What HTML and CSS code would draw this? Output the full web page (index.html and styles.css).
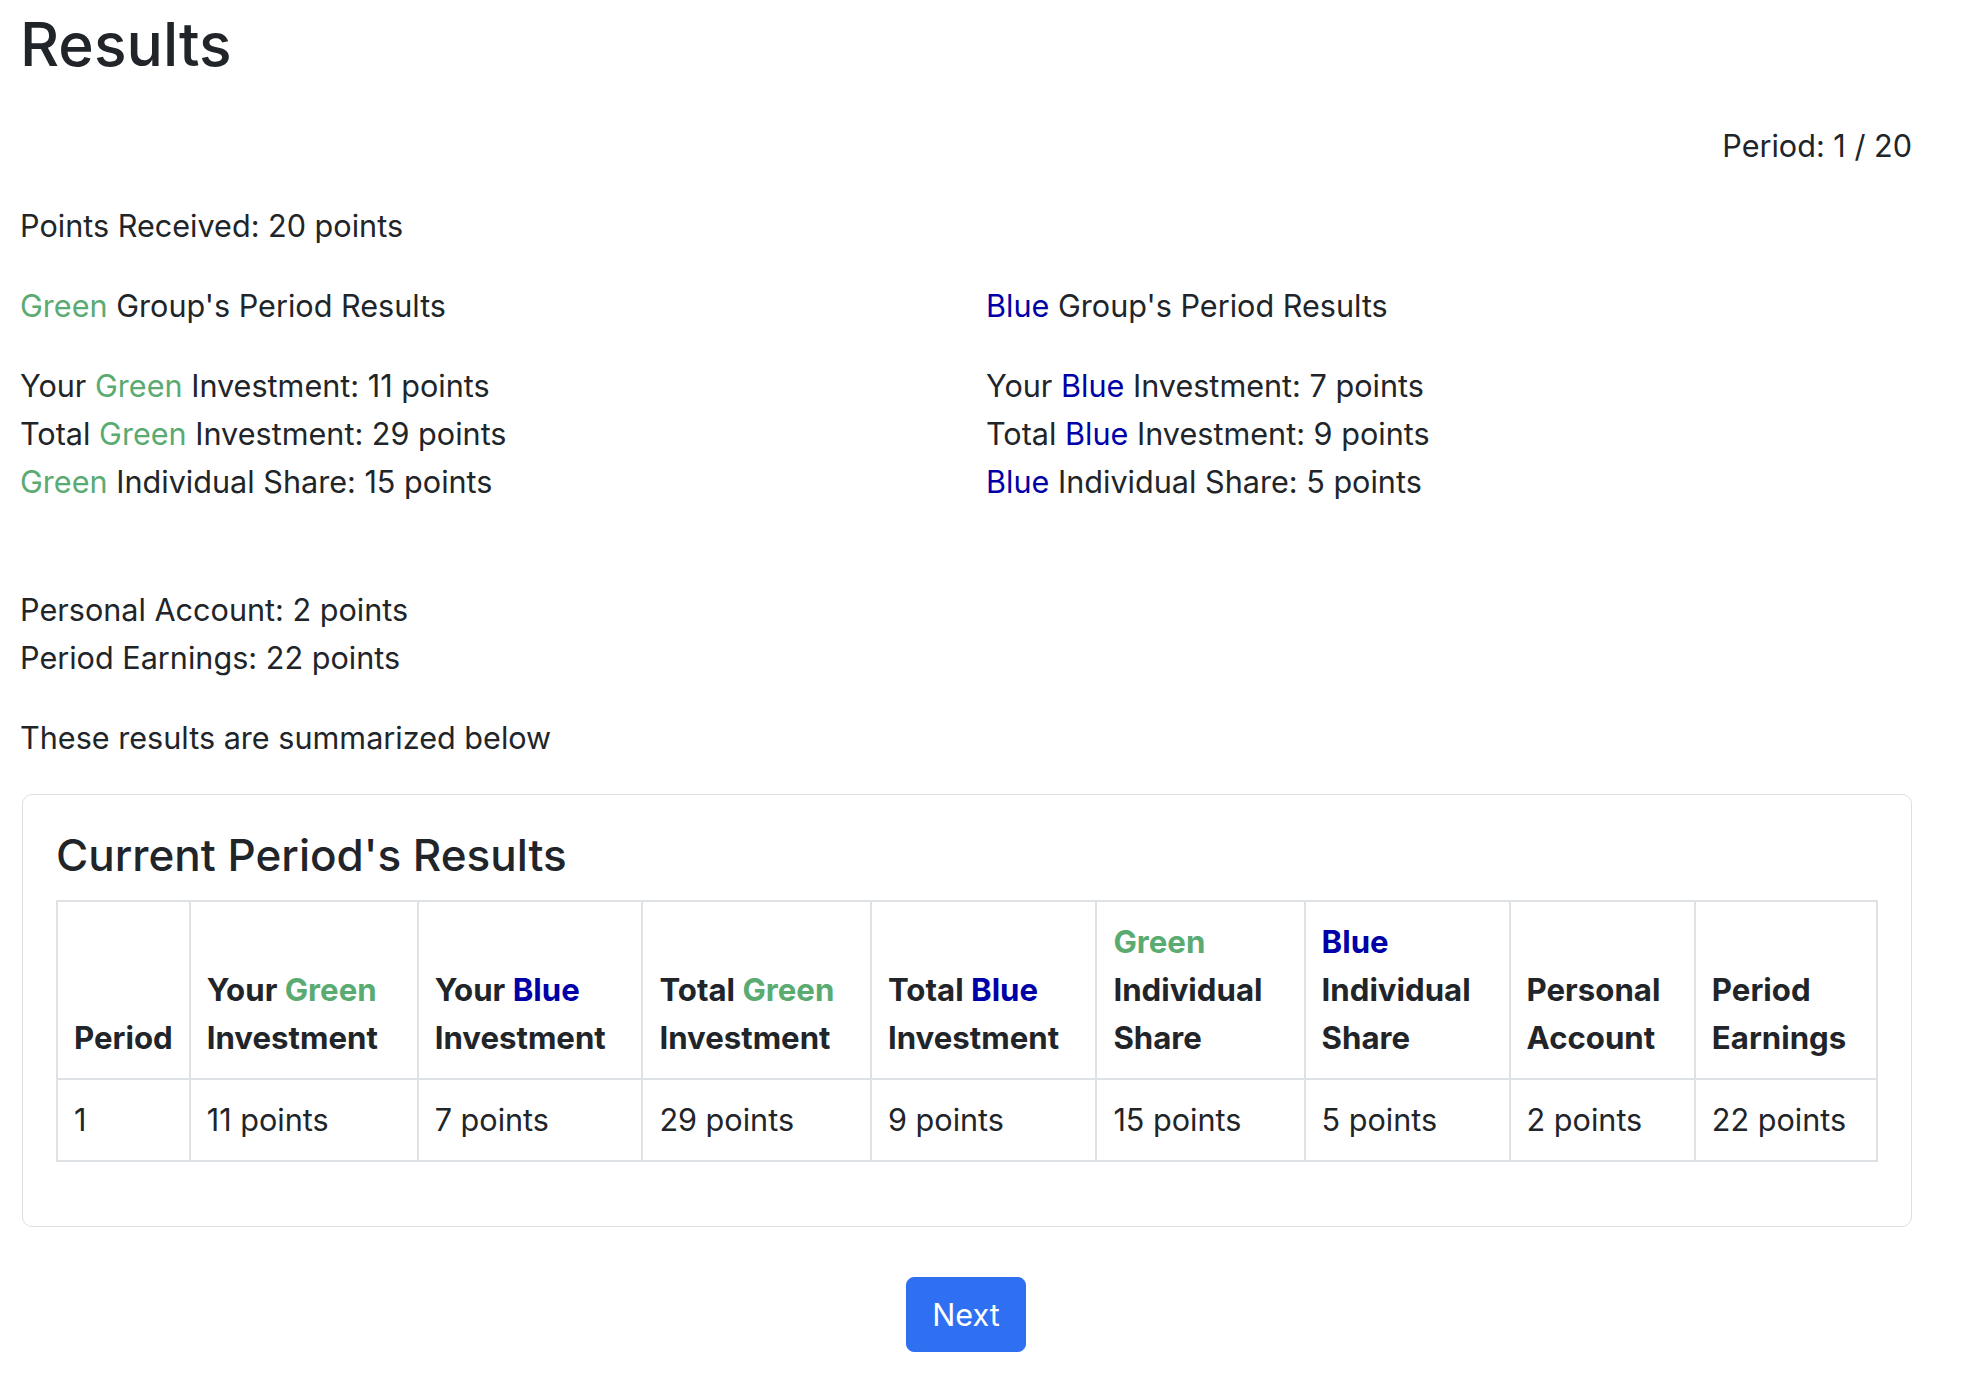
FILE: index.html
```html
<!DOCTYPE html>
<html lang="en">
<head>
<meta charset="utf-8">
<title>Results</title>
<link rel="stylesheet" href="styles.css">
</head>
<body>
<div class="page">
  <h1 class="title">Results</h1>
  <p class="period">Period: 1 / 20</p>
  <p class="line">Points Received: 20 points</p>
  <div class="groups">
    <div class="group">
      <p class="line"><span class="green">Green</span> Group's Period Results</p>
      <p class="line stack">Your <span class="green">Green</span> Investment: 11 points<br>Total <span class="green">Green</span> Investment: 29 points<br><span class="green">Green</span> Individual Share: 15 points<br><br></p>
    </div>
    <div class="group">
      <p class="line"><span class="blue">Blue</span> Group's Period Results</p>
      <p class="line stack">Your <span class="blue">Blue</span> Investment: 7 points<br>Total <span class="blue">Blue</span> Investment: 9 points<br><span class="blue">Blue</span> Individual Share: 5 points<br><br></p>
    </div>
  </div>
  <p class="line">Personal Account: 2 points<br>Period Earnings: 22 points</p>
  <p class="line">These results are summarized below</p>
  <div class="card">
    <h4 class="card-title">Current Period's Results</h4>
    <table class="results">
      <thead>
        <tr>
          <th>Period</th>
          <th>Your <span class="green">Green</span> Investment</th>
          <th>Your <span class="blue">Blue</span> Investment</th>
          <th>Total <span class="green">Green</span> Investment</th>
          <th>Total <span class="blue">Blue</span> Investment</th>
          <th><span class="green">Green</span> Individual Share</th>
          <th><span class="blue">Blue</span> Individual Share</th>
          <th>Personal Account</th>
          <th>Period Earnings</th>
        </tr>
      </thead>
      <tbody>
        <tr>
          <td>1</td>
          <td>11 points</td>
          <td>7 points</td>
          <td>29 points</td>
          <td>9 points</td>
          <td>15 points</td>
          <td>5 points</td>
          <td>2 points</td>
          <td>22 points</td>
        </tr>
      </tbody>
    </table>
  </div>
  <div class="actions">
    <button class="btn" type="button">Next</button>
  </div>
</div>
</body>
</html>
```

FILE: styles.css
```css
* { box-sizing: border-box; }
html, body {
  margin: 0;
  padding: 0;
  background: #ffffff;
}
body {
  font-family: Inter, "Noto Sans", "DejaVu Sans", sans-serif;
  font-size: 30.6px;
  line-height: 48px;
  color: #212529;
}
.page {
  width: 1912px;
  padding-left: 20px;
}
.title {
  font-size: 60.5px;
  font-weight: 500;
  line-height: 88px;
  margin: 0 0 34px 0;
}
.period {
  text-align: right;
  margin: 0 0 32px 0;
}
.line {
  margin: 0 0 32px 0;
}
.groups {
  display: grid;
  grid-template-columns: 966px 1fr;
}
.green { color: #5aab72; }
.blue { color: #0000a8; }
.card {
  margin-left: 2px;
  border: 1px solid #dfdfdf;
  border-radius: 10px;
  padding: 32px 33px 32px 33px;
}
.card-title {
  font-size: 44px;
  font-weight: 500;
  line-height: 57px;
  margin: 0 0 16px 0;
}
.results {
  width: 100%;
  border-collapse: collapse;
  margin-bottom: 32px;
}
.results th, .results td {
  border: 2px solid #dee2e6;
  padding: 16px 16px;
  text-align: left;
  font-weight: 400;
}
.results th {
  font-weight: 700;
  font-size: 31.2px;
  vertical-align: bottom;
}
.actions {
  display: flex;
  justify-content: center;
  padding-top: 50px;
  padding-left: 0;
}
.btn {
  font-family: inherit;
  font-size: 30.6px;
  line-height: 48px;
  color: #ffffff;
  background: #2f6ff2;
  border: 1px solid #2f6ff2;
  border-radius: 8px;
  padding: 13px 25px 12px 25px;
  cursor: pointer;
}
```
